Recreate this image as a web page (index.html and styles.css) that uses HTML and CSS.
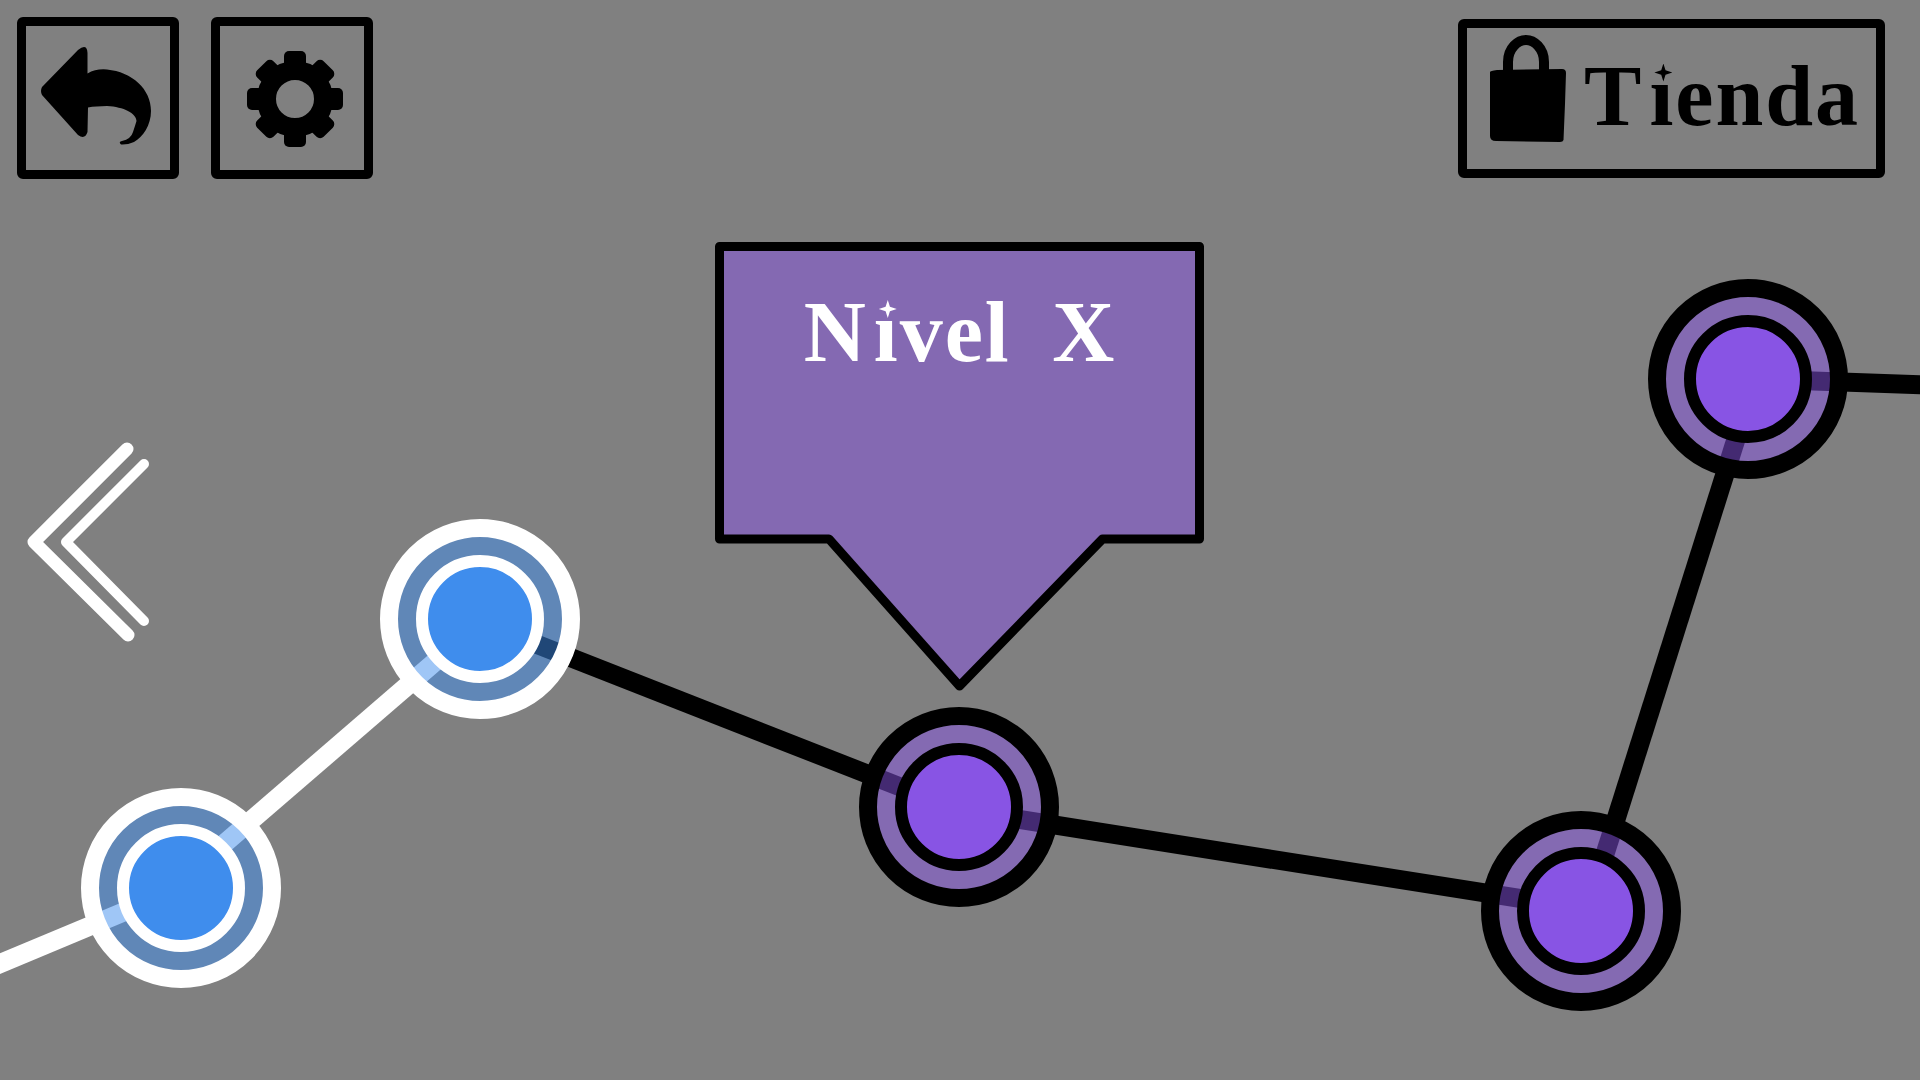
FILE: index.html
```html
<!DOCTYPE html>
<html lang="es">

<head>
  <meta charset="UTF-8">
  <meta name="viewport" content="width=device-width, initial-scale=1.0">
  <title>Mapa de niveles</title>
  <link rel="stylesheet" href="styles.css">
</head>

<body>
  <!-- Level map -->
  <svg class="map" viewBox="0 0 1920 1080" aria-hidden="true">
    <g class="path path-done">
      <line x1="-20" y1="972" x2="181" y2="888"></line>
      <line x1="181" y1="881" x2="480" y2="623"></line>
    </g>
    <g class="path path-locked">
      <line x1="480" y1="622" x2="959" y2="810"></line>
      <line x1="959" y1="810" x2="1581" y2="908"></line>
      <line x1="1587" y1="911" x2="1755" y2="379"></line>
      <line x1="1755" y1="379" x2="1930" y2="385"></line>
    </g>

    <g class="node node-done">
      <circle class="band" cx="181" cy="888" r="91"></circle>
      <circle class="core" cx="181" cy="888" r="58"></circle>
    </g>
    <g class="node node-done">
      <circle class="band" cx="480" cy="619" r="91"></circle>
      <circle class="core" cx="480" cy="619" r="58"></circle>
    </g>
    <g class="node node-locked">
      <circle class="band" cx="959" cy="807" r="91"></circle>
      <circle class="core" cx="959" cy="807" r="58"></circle>
    </g>
    <g class="node node-locked">
      <circle class="band" cx="1581" cy="911" r="91"></circle>
      <circle class="core" cx="1581" cy="911" r="58"></circle>
    </g>
    <g class="node node-locked">
      <circle class="band" cx="1748" cy="379" r="91"></circle>
      <circle class="core" cx="1748" cy="379" r="58"></circle>
    </g>

    <polyline class="chevron chevron-outer" points="127,449 34,542 128,635"></polyline>
    <polyline class="chevron chevron-inner" points="144,464 66,542 144,621"></polyline>
  </svg>

  <header class="toolbar">
    <div class="toolbar-left">
      <button class="icon-btn" type="button" aria-label="Volver">
        <svg class="btn-icon" viewBox="0 0 161 161">
          <path transform="translate(-17 -17)"
            d="M42 86 L78 49 Q87 42 87.5 52 L87.5 72.5 Q96 67.5 107 68.5 C132 71 151 88 151 110 C151 124 143 136 134 141 Q127 144 121 143.5 Q118 141 122 140 Q131 138 133 131 Q135 125 136.500 120 C136 112 124 106 107 105 Q96 105 88 106.500 L87.500 131 Q85 139 78 134 L42 94 Q40 90 42 86 Z">
          </path>
        </svg>
      </button>
      <button class="icon-btn" type="button" aria-label="Ajustes">
        <svg class="btn-icon" viewBox="0 0 161 161">
          <g transform="translate(84 81)">
            <circle class="gear-body" r="28.500"></circle>
            <rect class="gear-tooth" x="-11" y="-48" width="22" height="24" rx="5"></rect>
            <rect class="gear-tooth" x="-11.500" y="-47" width="23" height="24" rx="5" transform="rotate(45)"></rect>
            <rect class="gear-tooth" x="-11" y="-48" width="22" height="24" rx="5" transform="rotate(90)"></rect>
            <rect class="gear-tooth" x="-11.500" y="-47" width="23" height="24" rx="5" transform="rotate(135)"></rect>
            <rect class="gear-tooth" x="-11" y="-48" width="22" height="24" rx="5" transform="rotate(180)"></rect>
            <rect class="gear-tooth" x="-11.500" y="-47" width="23" height="24" rx="5" transform="rotate(225)"></rect>
            <rect class="gear-tooth" x="-11" y="-48" width="22" height="24" rx="5" transform="rotate(270)"></rect>
            <rect class="gear-tooth" x="-11.500" y="-47" width="23" height="24" rx="5" transform="rotate(315)"></rect>
          </g>
        </svg>
      </button>
    </div>
    <button class="shop-btn" type="button">
      <svg class="bag-icon" viewBox="0 0 76 108">
        <path class="bag-handle" d="M18 38 L18 28 C18 14 28 6 36 6 C44 6 54 14 54 28 L54 38"></path>
        <path d="M0 38 Q0 37 7 36 L72 35 Q76 35 76 39 L75 70 L73.500 106 Q73 108 70 108 L6 107 Q0 107 0 102 Z"></path>
      </svg>
      <span class="shop-label">T<span class="star-i">i</span>enda</span>
    </button>
  </header>

  <!-- Level tooltip -->
  <div class="level-tip">
    <svg class="tip-shape" viewBox="0 0 490 449" aria-hidden="true">
      <polygon points="4.500,4.500 484.500,4.500 484.500,297 387.500,297 244.500,444 114,297 4.500,297"></polygon>
    </svg>
    <span class="tip-label">N<span class="star-i">i</span>vel X</span>
  </div>
</body>

</html>
```

FILE: styles.css
```css
* {
  box-sizing: border-box;
  font-family: "Liberation Serif", "DejaVu Serif", serif;
}

html,
body {
  margin: 0;
  height: 100%;
}

body {
  position: relative;
  overflow: hidden;
  background: #808080;
}

.map {
  position: absolute;
  inset: 0;
  width: 1920px;
  height: 1080px;
}

.path line {
  stroke-width: 19;
}

.path-done line {
  stroke: #fff;
}

.path-locked line {
  stroke: #000;
}

.band {
  stroke-width: 18;
  fill-opacity: .5;
}

.core {
  stroke-width: 12;
}

.node-done circle {
  fill: #3f8ded;
  stroke: #fff;
}

.node-locked circle {
  fill: #8854e4;
  stroke: #000;
}

.chevron {
  fill: none;
  stroke: #fff;
  stroke-linecap: round;
  stroke-linejoin: round;
}

.chevron-outer {
  stroke-width: 13;
}

.chevron-inner {
  stroke-width: 10;
}

.toolbar {
  position: relative;
  display: flex;
  justify-content: space-between;
  align-items: center;
  padding: 17px 35px 0 17px;
}

.toolbar-left {
  display: flex;
  gap: 32px;
}

.icon-btn,
.shop-btn {
  padding: 0;
  background: none;
  border: 9px solid #000;
  border-radius: 6px;
  color: #000;
}

.icon-btn {
  width: 162px;
  height: 162px;
}

.btn-icon {
  display: block;
  width: 161px;
  height: 161px;
  margin: -9px;
}

.gear-body {
  fill: none;
  stroke: #000;
  stroke-width: 19;
}

.shop-btn {
  --label-bg: #808080;
  display: flex;
  align-items: flex-start;
  gap: 18px;
  width: 427px;
  height: 159px;
  padding: 6px 0 0 23px;
}

.bag-icon {
  flex: none;
  width: 76px;
  height: 108px;
  overflow: visible;
}

.bag-handle {
  fill: none;
  stroke: #000;
  stroke-width: 10;
}

.shop-label,
.tip-label {
  font-size: 86px;
  font-weight: bold;
  line-height: 100px;
  letter-spacing: 2px;
}

.shop-label {
  margin-top: 12px;
}

.level-tip {
  --label-bg: #8469b2;
  position: absolute;
  left: 715px;
  top: 242px;
  width: 490px;
  height: 449px;
  display: flex;
  justify-content: center;
  padding-top: 40px;
}

.tip-shape {
  position: absolute;
  inset: 0;
}

.tip-shape polygon {
  fill: #8469b2;
  stroke: #000;
  stroke-width: 9;
  stroke-linejoin: round;
}

.tip-label {
  position: relative;
  word-spacing: 18px;
  color: #fff;
}

/* the dot of the i is a small four point star */
.star-i {
  position: relative;
  margin-left: 6px;
}

.star-i::before,
.star-i::after {
  content: "";
  position: absolute;
}

.star-i::before {
  left: 0;
  right: 0;
  top: 15px;
  height: 18px;
  background: var(--label-bg);
}

.star-i::after {
  left: 5px;
  top: 16px;
  width: 18px;
  height: 18px;
  background: currentColor;
  clip-path: polygon(50% 0, 62% 38%, 100% 50%, 62% 62%, 50% 100%, 38% 62%, 0 50%, 38% 38%);
}
```
